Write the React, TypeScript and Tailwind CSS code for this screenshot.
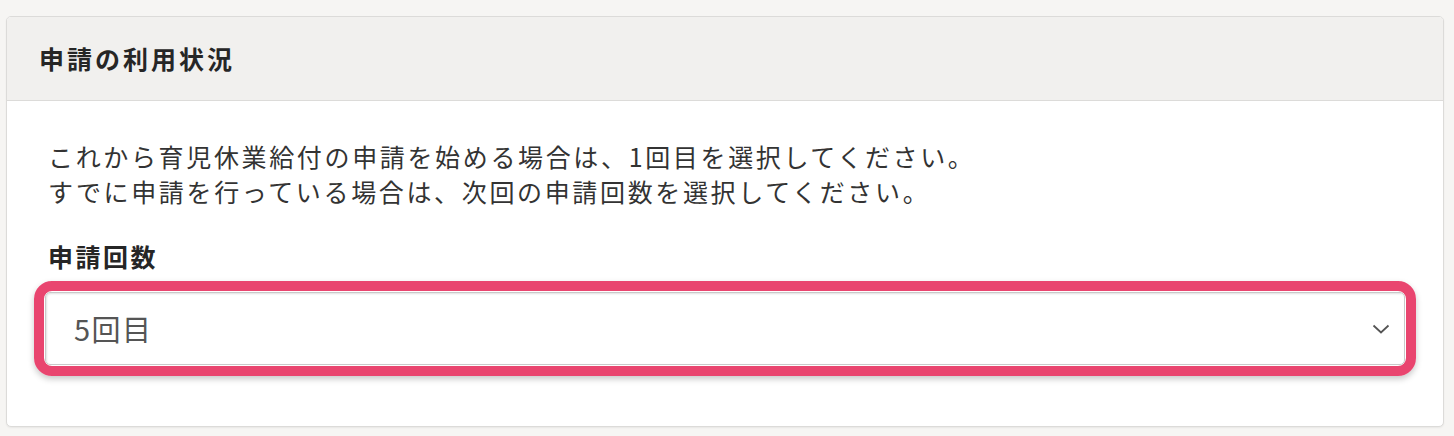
import React from "react";

export default function App() {
  return (
    <div
      className="w-[1454px] h-[436px] bg-[#f6f5f3] pt-[16px] pl-[6px] overflow-hidden"
      style={{ fontFamily: '"Noto Sans CJK JP", "Noto Sans", sans-serif' }}
    >
      <div className="w-[1438px] rounded-[5px] border border-[#dcdbd9] bg-white shadow-[0_1px_2px_rgba(0,0,0,0.06)] overflow-hidden">
        <div className="h-[84px] bg-[#f1f0ee] border-b border-[#dcdbd9] flex items-center px-[32px]">
          <h2 className="text-[25px] font-bold text-[#262626] tracking-[3px] leading-none">
            申請の利用状況
          </h2>
        </div>
        <div className="px-[39px] pt-[38px] pb-[50px]">
          <p className="text-[25px] leading-[35px] tracking-[2.65px] text-[#333] pl-[2px]">
            これから育児休業給付の申請を始める場合は、1回目を選択してください。
            <br />
            すでに申請を行っている場合は、次回の申請回数を選択してください。
          </p>
          <div className="mt-[30px] text-[25px] leading-[35px] font-bold text-[#262626] tracking-[2.5px] pl-[2px]">
            申請回数
          </div>
          <div className="mt-[7px] -mx-[12px] rounded-[18px] border-[10px] border-[#e9456f] p-[1px] shadow-[0_3px_6px_rgba(0,0,0,0.22)]">
            <div className="h-[73px] rounded-[5px] border border-[#c9c9c9] bg-white shadow-[inset_1px_1px_2px_rgba(0,0,0,0.12)] flex items-center justify-between pl-[28px] pr-[14px]">
              <span className="text-[29px] text-[#555] tracking-[1.5px]">5回目</span>
              <svg width="18" height="10" viewBox="0 0 18 10" fill="none">
                <path d="M1.5 1.5 L9 8.5 L16.5 1.5" stroke="#555" strokeWidth="1.8" />
              </svg>
            </div>
          </div>
        </div>
      </div>
    </div>
  );
}
